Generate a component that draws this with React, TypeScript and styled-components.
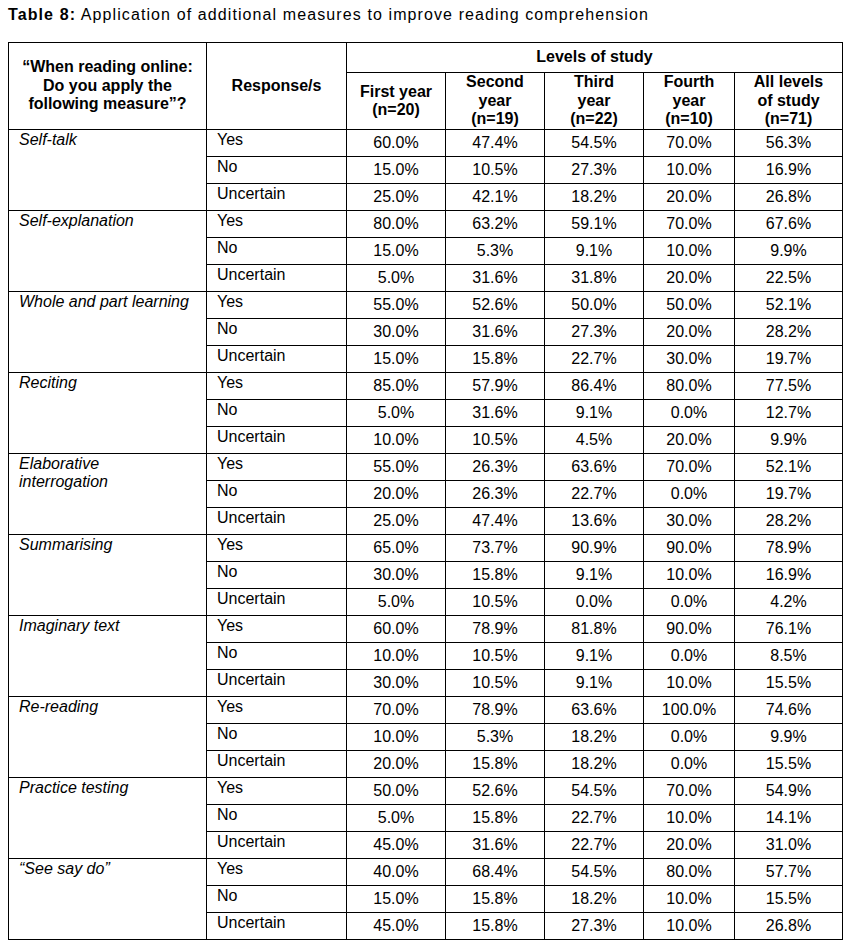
import React from "react";
import styled, { createGlobalStyle } from "styled-components";

const Global = createGlobalStyle`
  html, body { margin: 0; padding: 0; background: #fff; }
  body { font-family: "Liberation Sans", Arial, sans-serif; color: #000; }
`;

const Page = styled.div`
  padding: 6px 8px 0 8px;
`;

const Title = styled.div`
  font-size: 16px;
  line-height: 18px;
  letter-spacing: 1.1px;
  margin-bottom: 18px;
  white-space: nowrap;
  b { font-weight: bold; }
`;

const Table = styled.table`
  border-collapse: collapse;
  table-layout: fixed;
  width: 835px;
  font-size: 16px;
  line-height: 18.4px;
`;

const HeadCell = styled.th<{ $h?: number }>`
  border: 1px solid #000;
  font-weight: bold;
  text-align: center;
  vertical-align: middle;
  padding: 0 4px;
  height: ${(p) => (p.$h ? `${p.$h}px` : "auto")};
`;

const BodyRow = styled.tr`
  height: 27px;
`;

const LabelCell = styled.td`
  border: 1px solid #000;
  font-style: italic;
  vertical-align: top;
  padding: 1px 6px 0 10px;
`;

const ResponseCell = styled.td`
  border: 1px solid #000;
  vertical-align: top;
  padding: 1px 6px 0 10px;
`;

const ValueCell = styled.td`
  border: 1px solid #000;
  vertical-align: middle;
  text-align: center;
  padding: 0;
`;

type Group = { label: React.ReactNode; rows: string[][] };

const groups: Group[] = [
  { label: "Self-talk", rows: [["60.0", "47.4", "54.5", "70.0", "56.3"], ["15.0", "10.5", "27.3", "10.0", "16.9"], ["25.0", "42.1", "18.2", "20.0", "26.8"]] },
  { label: "Self-explanation", rows: [["80.0", "63.2", "59.1", "70.0", "67.6"], ["15.0", "5.3", "9.1", "10.0", "9.9"], ["5.0", "31.6", "31.8", "20.0", "22.5"]] },
  { label: "Whole and part learning", rows: [["55.0", "52.6", "50.0", "50.0", "52.1"], ["30.0", "31.6", "27.3", "20.0", "28.2"], ["15.0", "15.8", "22.7", "30.0", "19.7"]] },
  { label: "Reciting", rows: [["85.0", "57.9", "86.4", "80.0", "77.5"], ["5.0", "31.6", "9.1", "0.0", "12.7"], ["10.0", "10.5", "4.5", "20.0", "9.9"]] },
  { label: <>Elaborative<br />interrogation</>, rows: [["55.0", "26.3", "63.6", "70.0", "52.1"], ["20.0", "26.3", "22.7", "0.0", "19.7"], ["25.0", "47.4", "13.6", "30.0", "28.2"]] },
  { label: "Summarising", rows: [["65.0", "73.7", "90.9", "90.0", "78.9"], ["30.0", "15.8", "9.1", "10.0", "16.9"], ["5.0", "10.5", "0.0", "0.0", "4.2"]] },
  { label: "Imaginary text", rows: [["60.0", "78.9", "81.8", "90.0", "76.1"], ["10.0", "10.5", "9.1", "0.0", "8.5"], ["30.0", "10.5", "9.1", "10.0", "15.5"]] },
  { label: "Re-reading", rows: [["70.0", "78.9", "63.6", "100.0", "74.6"], ["10.0", "5.3", "18.2", "0.0", "9.9"], ["20.0", "15.8", "18.2", "0.0", "15.5"]] },
  { label: "Practice testing", rows: [["50.0", "52.6", "54.5", "70.0", "54.9"], ["5.0", "15.8", "22.7", "10.0", "14.1"], ["45.0", "31.6", "22.7", "20.0", "31.0"]] },
  { label: "\u201CSee say do\u201D", rows: [["40.0", "68.4", "54.5", "80.0", "57.7"], ["15.0", "15.8", "18.2", "10.0", "15.5"], ["45.0", "15.8", "27.3", "10.0", "26.8"]] },
];

const responses = ["Yes", "No", "Uncertain"];
const colWidths = [198, 140, 99, 99, 99, 91, 108];

export default function App() {
  return (
    <>
      <Global />
      <Page>
        <Title>
          <b>Table 8:</b> Application of additional measures to improve reading comprehension
        </Title>
        <Table>
          <colgroup>
            {colWidths.map((w, i) => (
              <col key={i} style={{ width: w }} />
            ))}
          </colgroup>
          <thead>
            <tr>
              <HeadCell rowSpan={2}>
                {"\u201CWhen reading online:"}
                <br />
                Do you apply the
                <br />
                {"following measure\u201D?"}
              </HeadCell>
              <HeadCell rowSpan={2}>Response/s</HeadCell>
              <HeadCell colSpan={5} $h={29}>
                Levels of study
              </HeadCell>
            </tr>
            <tr>
              <HeadCell $h={56}>First year<br />(n=20)</HeadCell>
              <HeadCell>Second<br />year<br />(n=19)</HeadCell>
              <HeadCell>Third<br />year<br />(n=22)</HeadCell>
              <HeadCell>Fourth<br />year<br />(n=10)</HeadCell>
              <HeadCell>All levels<br />of study<br />(n=71)</HeadCell>
            </tr>
          </thead>
          <tbody>
            {groups.map((g, gi) =>
              g.rows.map((r, ri) => (
                <BodyRow key={`${gi}-${ri}`}>
                  {ri === 0 && <LabelCell rowSpan={3}>{g.label}</LabelCell>}
                  <ResponseCell>{responses[ri]}</ResponseCell>
                  {r.map((v, vi) => (
                    <ValueCell key={vi}>{v}%</ValueCell>
                  ))}
                </BodyRow>
              ))
            )}
          </tbody>
        </Table>
      </Page>
    </>
  );
}
